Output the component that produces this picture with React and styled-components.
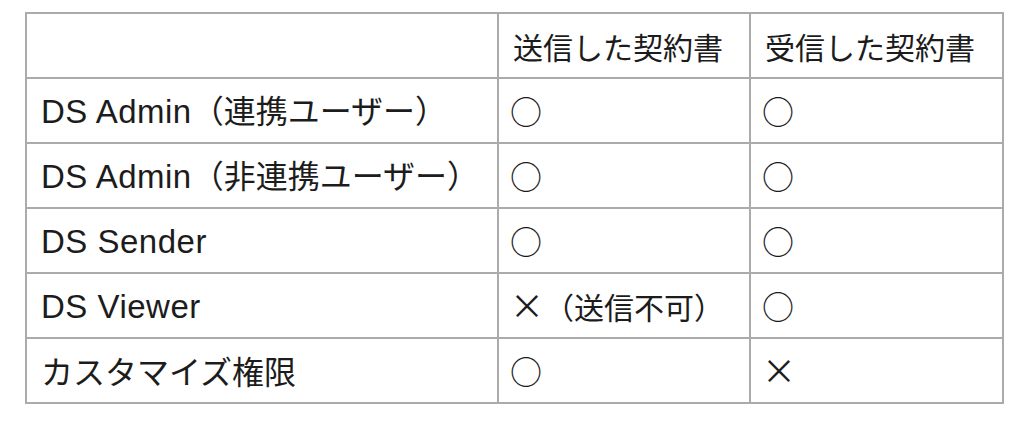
import React from "react";
import styled, { createGlobalStyle } from "styled-components";

const GlobalStyle = createGlobalStyle`
  body {
    margin: 0;
    background: #ffffff;
  }
`;

const Page = styled.div`
  padding: 12px 22px 0 25px;
`;

const Table = styled.table`
  width: 977px;
  table-layout: fixed;
  border-collapse: collapse;
  font-family: "Noto Sans CJK JP", sans-serif;
  font-size: 30px;
  color: #1c1c1c;
`;

const Cell = styled.td`
  height: 63px;
  padding: 0 0 0 14px;
  border: 2px solid #ababab;
  white-space: nowrap;
  vertical-align: middle;
  font-weight: 400;
  text-align: left;
  line-height: 1.2;
`;

const HeadCell = styled(Cell).attrs({ as: "th" })``;

const LabelCell = styled(Cell)`
  font-size: 32px;
`;

const Latin = styled.span`
  font-family: "Liberation Sans", sans-serif;
  font-size: 33px;
  letter-spacing: 0.5px;
`;

const Mark = styled.span`
  display: inline-block;
  margin-left: -3px;
  font-size: ${(p) => (p.$cross ? "34px" : "32px")};
  line-height: 1;
`;

const rows = [
  { en: "DS Admin", ja: "（連携ユーザー）", sent: "o", got: "o" },
  { en: "DS Admin", ja: "（非連携ユーザー）", sent: "o", got: "o" },
  { en: "DS Sender", ja: "", sent: "o", got: "o" },
  { en: "DS Viewer", ja: "", sent: "x（送信不可）", got: "o" },
  { en: "", ja: "カスタマイズ権限", sent: "o", got: "x" },
];

const Value = ({ v }) => {
  if (v === "o") return <Mark>○</Mark>;
  if (v === "x") return <Mark $cross>×</Mark>;
  return (
    <>
      <Mark $cross>×</Mark>
      <span>{v.slice(1)}</span>
    </>
  );
};

export default function App() {
  return (
    <Page>
      <GlobalStyle />
      <Table>
        <colgroup>
          <col style={{ width: 472 }} />
          <col style={{ width: 252 }} />
          <col style={{ width: 253 }} />
        </colgroup>
        <thead>
          <tr>
            <HeadCell />
            <HeadCell>送信した契約書</HeadCell>
            <HeadCell>受信した契約書</HeadCell>
          </tr>
        </thead>
        <tbody>
          {rows.map((r, i) => (
            <tr key={i}>
              <LabelCell>
                {r.en && <Latin>{r.en}</Latin>}
                {r.ja}
              </LabelCell>
              <Cell>
                <Value v={r.sent} />
              </Cell>
              <Cell>
                <Value v={r.got} />
              </Cell>
            </tr>
          ))}
        </tbody>
      </Table>
    </Page>
  );
}
